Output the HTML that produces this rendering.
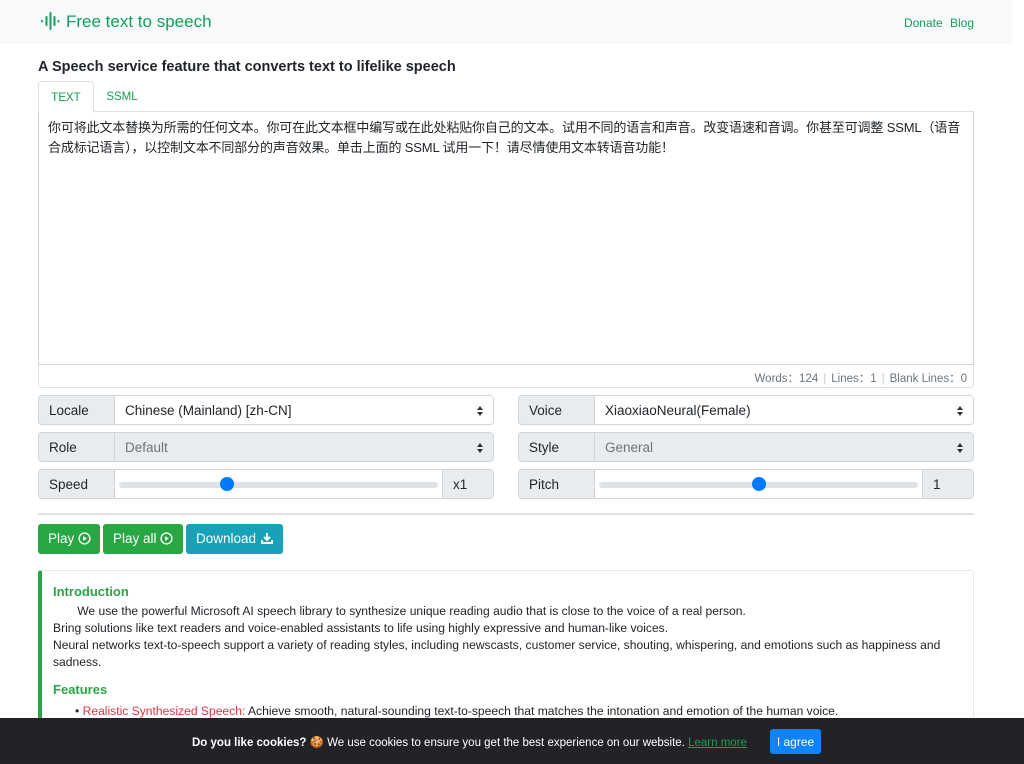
<!DOCTYPE html>
<html style="height:764px;overflow:hidden"><head><meta charset="utf-8"><style>
*{box-sizing:border-box}
body{margin:0;width:1024px;height:764px;overflow:hidden;font-family:"Liberation Sans","Noto Sans CJK SC",sans-serif;color:#212529;background:#fff;position:relative}
.hdr{position:absolute;left:0;top:0;width:1012px;height:44px;background:#f8f9fa}
.logo{position:absolute;left:40px;top:12px;color:#13a05a;font-size:17px}
.logo svg{vertical-align:-3px;margin-right:6px}
.nav{position:absolute;right:38px;top:16px;color:#13a05a;font-size:12px;word-spacing:4px}
h1{position:absolute;left:38px;top:59px;margin:0;font-size:14.5px;font-weight:600}
.tabs{position:absolute;left:38px;top:81px;width:936px;height:31px;border-bottom:1px solid #dee2e6}
.tab{position:absolute;top:0;height:32px;font-size:11.5px;color:#13a05a;padding-top:10px;text-align:center}
.t1{left:0;width:56px;border:1px solid #dee2e6;border-bottom:1px solid #fff;border-radius:4px 4px 0 0;background:#fff}
.t2{left:56px;width:56px}
.ta{position:absolute;left:38px;top:112px;width:936px;height:253px;border:1px solid #ced4da;border-top:none;padding:6px 9px;font-size:13px;line-height:20px;letter-spacing:-0.15px}
.stats{position:absolute;left:38px;top:364px;width:936px;height:24px;border:1px solid #dee2e6;border-top:none;border-radius:0 0 4px 4px;font-size:11.5px;color:#6c757d;text-align:right;padding:6px 6px 0 0}
.stats span{color:#ccc;margin:0 5px}
.g{position:absolute;height:30px;width:456px;border:1px solid #ced4da;border-radius:4px;overflow:hidden;font-size:13.5px}
.g .l{position:absolute;left:0;top:0;bottom:0;width:76px;background:#e9ecef;border-right:1px solid #ced4da;padding:7px 10px}
.g .v{position:absolute;left:76px;top:0;bottom:0;right:0;padding:7px 10px;background:#fff}
.g .v.d{background:#e9ecef;color:#6c757d}
.g .v::after{content:"";position:absolute;right:10px;top:10px;border:3.5px solid transparent;border-bottom:4px solid #333;border-top:0}
.g .v::before{content:"";position:absolute;right:10px;top:16px;border:3.5px solid transparent;border-top:4px solid #333;border-bottom:0}
.g .v.s::after,.g .v.s::before{display:none}
.trk{position:absolute;left:4px;right:4px;top:12px;height:6px;background:#dee2e6;border-radius:3px}
.th{position:absolute;top:7px;width:14px;height:14px;border-radius:50%;background:#007bff}
.g .x{position:absolute;right:0;top:0;bottom:0;width:51px;background:#e9ecef;border-left:1px solid #ced4da;padding:7px 10px}
hr{position:absolute;left:38px;top:513px;width:936px;margin:0;border:0;border-top:2px solid #dee2e6}
.b{position:absolute;top:524px;height:30px;color:#fff;font-size:13.5px;border-radius:3px;padding:7px 0 0 10px}
.b svg{vertical-align:-2px}
.card{position:absolute;left:38px;top:570px;width:936px;height:194px;overflow:hidden;border:1px solid #e6e6e6;border-bottom:none;border-left:4px solid #28a745;border-radius:3px 3px 0 0;padding:10px 11px;font-size:12.1px;line-height:17px}
.card h3{margin:0;color:#28a745;font-size:13px;font-weight:600;line-height:22px}
.cookie{position:absolute;left:0;top:718px;width:1024px;height:46px;background:#222327;color:#fff;font-size:11.5px}
.cookie .t{position:absolute;left:192px;top:17px}
.cookie a{color:#1f9d55;text-decoration:underline}
.ag{position:absolute;left:770px;top:11px;width:51px;height:25px;background:#0d84ff;border-radius:3px;text-align:center;padding-top:6px;font-size:12px}
</style></head><body>
<div class="hdr">
<div class="logo"><svg width="20" height="18" viewBox="0 0 20 18" stroke="#13a05a" stroke-width="2" stroke-linecap="round"><line x1="2" y1="9" x2="2" y2="9.5"/><line x1="6.5" y1="5" x2="6.5" y2="13"/><line x1="10.5" y1="1" x2="10.5" y2="17"/><line x1="14.5" y1="5" x2="14.5" y2="13"/><line x1="18.5" y1="9" x2="18.5" y2="9.5"/></svg>Free text to speech</div>
<div class="nav">Donate Blog</div>
</div>
<h1>A Speech service feature that converts text to lifelike speech</h1>
<div class="tabs"><div class="tab t1">TEXT</div><div class="tab t2">SSML</div></div>
<div class="ta">你可将此文本替换为所需的任何文本。你可在此文本框中编写或在此处粘贴你自己的文本。试用不同的语言和声音。改变语速和音调。你甚至可调整 SSML（语音合成标记语言），以控制文本不同部分的声音效果。单击上面的 SSML 试用一下！请尽情使用文本转语音功能！</div>
<div class="stats">Words：124<span>|</span>Lines：1<span>|</span>Blank Lines：0</div>
<div class="g" style="left:38px;top:395px"><div class="l">Locale</div><div class="v">Chinese (Mainland) [zh-CN]</div></div>
<div class="g" style="left:518px;top:395px"><div class="l">Voice</div><div class="v">XiaoxiaoNeural(Female)</div></div>
<div class="g" style="left:38px;top:432px"><div class="l">Role</div><div class="v d">Default</div></div>
<div class="g" style="left:518px;top:432px"><div class="l">Style</div><div class="v d">General</div></div>
<div class="g" style="left:38px;top:469px"><div class="l">Speed</div><div class="v s" style="right:51px"><div class="trk"></div><div class="th" style="left:105px"></div></div><div class="x">x1</div></div>
<div class="g" style="left:518px;top:469px"><div class="l">Pitch</div><div class="v s" style="right:51px"><div class="trk"></div><div class="th" style="left:157px"></div></div><div class="x">1</div></div>
<hr>
<div class="b" style="left:38px;width:62px;background:#28a745">Play <svg width="13" height="13" viewBox="0 0 14 14"><circle cx="7" cy="7" r="5.8" fill="none" stroke="#fff" stroke-width="1.5"/><path d="M5.5 4.5L9.5 7 5.5 9.5z" fill="#fff"/></svg></div>
<div class="b" style="left:103px;width:80px;background:#28a745">Play all <svg width="13" height="13" viewBox="0 0 14 14"><circle cx="7" cy="7" r="5.8" fill="none" stroke="#fff" stroke-width="1.5"/><path d="M5.5 4.5L9.5 7 5.5 9.5z" fill="#fff"/></svg></div>
<div class="b" style="left:186px;width:97px;background:#17a2b8">Download <svg width="14" height="13" viewBox="0 0 14 13"><path d="M7 1v7M4 5l3 3 3-3" stroke="#fff" stroke-width="2" fill="none"/><path d="M1 8v4h12V8h-2v2H3V8z" fill="#fff"/></svg></div>
<div class="card">
<h3>Introduction</h3>
<div>&emsp;&emsp;We use the powerful Microsoft AI speech library to synthesize unique reading audio that is close to the voice of a real person.</div>
<div>Bring solutions like text readers and voice-enabled assistants to life using highly expressive and human-like voices.</div>
<div>Neural networks text-to-speech support a variety of reading styles, including newscasts, customer service, shouting, whispering, and emotions such as happiness and sadness.</div>
<h3 style="margin-top:8px">Features</h3>
<div style="padding-left:22px;margin-top:2px">• <span style="color:#dc3545">Realistic Synthesized Speech:</span> Achieve smooth, natural-sounding text-to-speech that matches the intonation and emotion of the human voice.</div>
</div>
<div class="cookie"><div class="t"><b>Do you like cookies?</b> 🍪 We use cookies to ensure you get the best experience on our website. <a>Learn more</a></div><div class="ag">I agree</div></div>
</body></html>
